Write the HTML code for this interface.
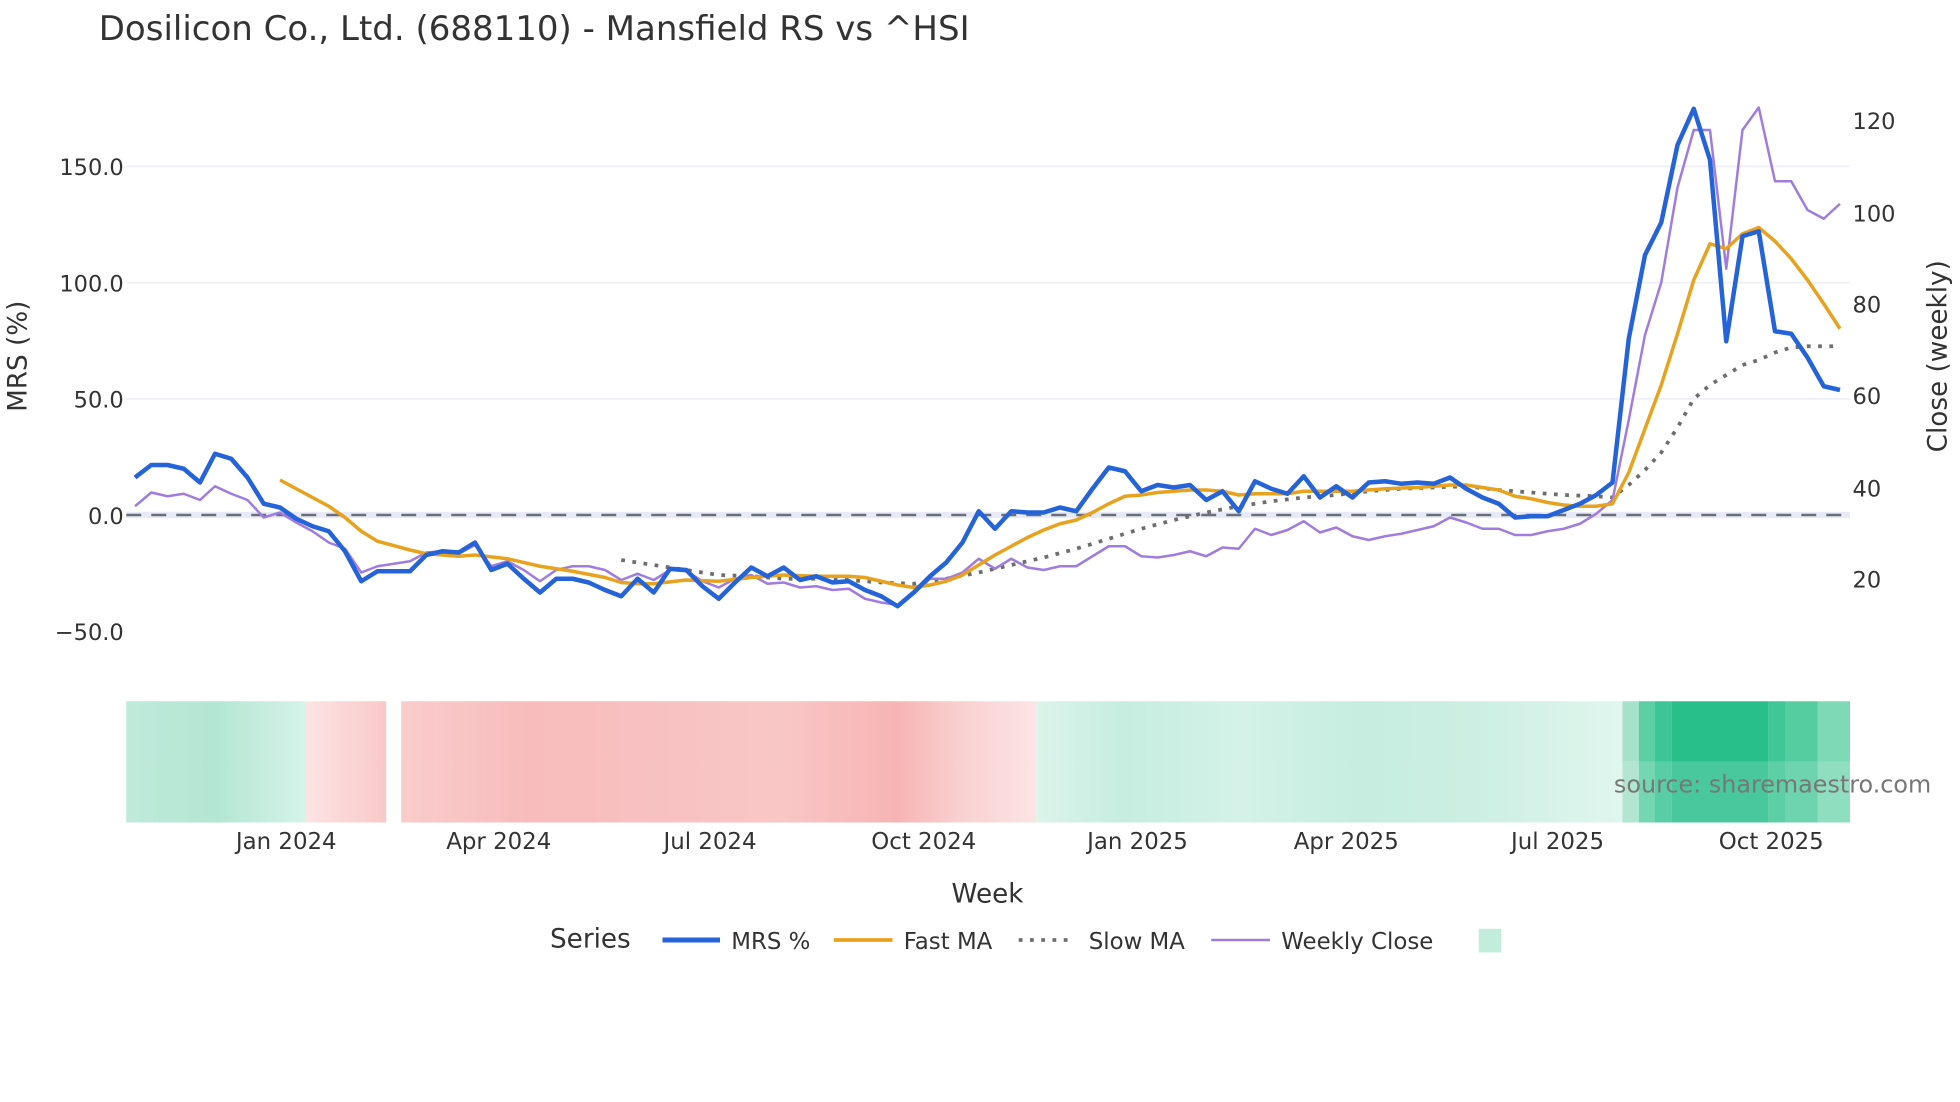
<!DOCTYPE html>
<html><head><meta charset="utf-8"><style>
html,body{margin:0;padding:0;background:#fff;}
svg{display:block;font-family:"DejaVu Sans","Liberation Sans",sans-serif;}
</style></head><body>
<svg width="1960" height="1102" viewBox="0 0 1568 881.6" xmlns="http://www.w3.org/2000/svg">
<rect width="1568" height="882" fill="#fff"/>
<text x="79" y="32" font-size="27.2" style="fill:#333">Dosilicon Co., Ltd. (688110) - Mansfield RS vs ^HSI</text>
<g stroke="#eef0f4" stroke-width="1.5">
<line x1="101" x2="1480" y1="133" y2="133"/><line x1="101" x2="1480" y1="226" y2="226"/><line x1="101" x2="1480" y1="319" y2="319"/>
</g>
<line x1="101" x2="1480" y1="412" y2="412" stroke="#e8eaf8" stroke-width="5"/>
<line x1="101" x2="1480" y1="412" y2="412" stroke="#6b6f78" stroke-width="2" stroke-dasharray="12,8"/>
<g font-size="18" fill="#333" text-anchor="end">
<text x="99" y="140">150.0</text><text x="99" y="233">100.0</text><text x="99" y="326">50.0</text><text x="99" y="419">0.0</text><text x="99" y="512">−50.0</text>
</g>
<g font-size="18" fill="#333">
<text x="1482" y="103">120</text><text x="1482" y="177">100</text><text x="1482" y="250">80</text><text x="1482" y="323">60</text><text x="1482" y="397">40</text><text x="1482" y="470">20</text>
</g>
<text transform="translate(21,285) rotate(-90)" font-size="21" fill="#333" text-anchor="middle">MRS (%)</text>
<text transform="translate(1557,285) rotate(-90)" font-size="21" fill="#333" text-anchor="middle">Close (weekly)</text>
<polyline fill="none" stroke="#6e6e6e" stroke-width="3" stroke-dasharray="3,6" points="497,448 523,452 549,456 575,460 601,461 627,463 653,463 679,464 705,466 731,467 757,463 783,458 809,452 835,446 861,439 887,431 913,423 939,416 965,410 991,405 1017,401 1043,398 1069,396 1095,393 1121,391 1147,390 1173,389 1199,392 1225,394 1251,396 1277,397 1290,398 1303,388 1316,376 1329,362 1342,342 1355,319 1368,308 1381,300 1394,292 1407,288 1420,282 1433,278 1446,277 1459,277 1472,277"/>
<polyline fill="none" stroke="#a07ce0" stroke-width="2" stroke-linejoin="round" points="108,405 121,394 134,397 147,395 160,400 172,389 185,395 198,400 211,414 224,410 237,418 250,425 263,434 276,439 289,458 302,453 315,451 328,449 341,442 354,441 367,443 380,436 393,453 406,449 419,456 432,465 445,456 458,453 471,453 484,456 497,464 510,459 523,464 536,456 549,457 562,465 575,470 588,463 601,460 614,467 627,466 640,470 653,469 666,472 679,471 692,479 705,482 718,484 731,475 744,463 757,463 770,458 783,447 796,455 809,447 822,454 835,456 848,453 861,453 874,445 887,437 900,437 913,445 926,446 939,444 952,441 965,445 978,438 991,439 1004,423 1017,428 1030,424 1043,417 1056,426 1069,422 1082,429 1095,432 1108,429 1121,427 1134,424 1147,421 1160,414 1173,418 1186,423 1199,423 1212,428 1225,428 1238,425 1251,423 1264,419 1277,411 1290,400 1303,336 1316,268 1329,226 1342,150 1355,104 1368,104 1381,215 1394,104 1407,86 1420,145 1433,145 1446,168 1459,175 1472,163"/>
<polyline fill="none" stroke="#e8a21d" stroke-width="2.8" stroke-linejoin="round" points="224,384 250,398 263,405 276,414 289,425 302,433 328,440 341,443 367,445 380,444 406,447 432,453 458,457 484,462 497,466 510,467 523,467 549,464 575,465 601,462 627,460 653,461 679,461 692,462 705,465 718,468 731,470 744,468 757,465 770,460 783,452 796,444 809,437 822,430 835,424 848,419 861,416 874,410 887,403 900,397 913,396 926,394 939,393 952,392 965,392 978,393 991,396 1004,395 1030,395 1043,393 1069,393 1082,393 1108,391 1134,390 1160,388 1173,388 1186,390 1199,392 1212,397 1225,399 1238,402 1251,404 1264,405 1277,405 1290,403 1303,378 1316,343 1329,308 1342,267 1355,224 1368,195 1381,199 1394,187 1407,182 1420,193 1433,207 1446,224 1459,243 1472,263"/>
<polyline fill="none" stroke="#2563d9" stroke-width="3.6" stroke-linejoin="round" points="108,382 121,372 134,372 147,375 160,386 172,363 185,367 198,382 211,403 224,406 237,415 250,421 263,425 276,441 289,465 302,457 315,457 328,457 341,444 354,441 367,442 380,434 393,456 406,451 419,463 432,474 445,463 458,463 471,466 484,472 497,477 510,463 523,474 536,455 549,456 562,469 575,479 588,466 601,454 614,461 627,454 640,464 653,461 666,466 679,465 692,472 705,477 718,485 731,474 744,461 757,450 770,434 783,409 796,423 809,409 822,410 835,410 848,406 861,409 874,391 887,374 900,377 913,393 926,388 939,390 952,388 965,400 978,393 991,409 1004,385 1017,391 1030,395 1043,381 1056,398 1069,389 1082,398 1095,386 1108,385 1121,387 1134,386 1147,387 1160,382 1173,391 1186,398 1199,403 1212,414 1225,413 1238,413 1251,408 1264,403 1277,396 1290,386 1303,271 1316,204 1329,178 1342,116 1355,87 1368,128 1381,273 1394,189 1407,185 1420,265 1433,267 1446,286 1459,309 1472,312"/>
<defs>
<linearGradient id="g1" x1="0" x2="1"><stop offset="0" stop-color="#bfeadb"/><stop offset="0.5" stop-color="#b3e6d3"/><stop offset="1" stop-color="#d6f3e9"/></linearGradient>
<linearGradient id="g2" x1="0" x2="1"><stop offset="0" stop-color="#fde4e4"/><stop offset="1" stop-color="#f9c8c8"/></linearGradient>
<linearGradient id="g3" x1="0" x2="1"><stop offset="0" stop-color="#f9cccc"/><stop offset="0.2" stop-color="#f8bcbc"/><stop offset="0.45" stop-color="#f8c2c2"/><stop offset="0.6" stop-color="#f9c6c6"/><stop offset="0.78" stop-color="#f7b4b4"/><stop offset="0.88" stop-color="#f9d0d0"/><stop offset="1" stop-color="#fce4e4"/></linearGradient>
<linearGradient id="g4" x1="0" x2="1"><stop offset="0" stop-color="#dcf4eb"/><stop offset="0.15" stop-color="#c6ede0"/><stop offset="0.35" stop-color="#d4f2e8"/><stop offset="0.55" stop-color="#c6ede0"/><stop offset="0.75" stop-color="#cdefe3"/><stop offset="1" stop-color="#e0f6ee"/></linearGradient>
</defs>
<rect x="101" y="561" width="143" height="97" fill="url(#g1)"/>
<rect x="244" y="561" width="65" height="97" fill="url(#g2)"/>
<rect x="321" y="561" width="508" height="97" fill="url(#g3)"/>
<rect x="829" y="561" width="469" height="97" fill="url(#g4)"/>
<rect x="1298" y="561" width="13" height="97" fill="#a6e2cb"/>
<rect x="1311" y="561" width="13" height="97" fill="#5ccfa5"/>
<rect x="1324" y="561" width="13" height="97" fill="#3cc596"/>
<rect x="1337" y="561" width="78" height="97" fill="#28bf8b"/>
<rect x="1415" y="561" width="13" height="97" fill="#40c797"/>
<rect x="1428" y="561" width="26" height="97" fill="#55cda1"/>
<rect x="1454" y="561" width="26" height="97" fill="#7dd9b6"/>
<rect x="1298" y="609" width="182" height="49" fill="#fff" opacity="0.15"/>
<text x="1545" y="634" font-size="19.1" fill="#777" text-anchor="end">source: sharemaestro.com</text>
<g font-size="18.3" fill="#333" text-anchor="middle">
<text x="229" y="679">Jan 2024</text><text x="399" y="679">Apr 2024</text><text x="568" y="679">Jul 2024</text><text x="739" y="679">Oct 2024</text><text x="910" y="679">Jan 2025</text><text x="1077" y="679">Apr 2025</text><text x="1246" y="679">Jul 2025</text><text x="1417" y="679">Oct 2025</text>
</g>
<text x="790" y="722" font-size="21" fill="#333" text-anchor="middle">Week</text>
<text x="440" y="758" font-size="21" fill="#333">Series</text>
<line x1="530" x2="576" y1="752" y2="752" stroke="#2563d9" stroke-width="4"/>
<text x="585" y="759" font-size="18.3" fill="#333">MRS %</text>
<line x1="667" x2="714" y1="752" y2="752" stroke="#e8a21d" stroke-width="3"/>
<text x="723" y="759" font-size="18.3" fill="#333">Fast MA</text>
<line x1="815" x2="860" y1="752" y2="752" stroke="#6e6e6e" stroke-width="3" stroke-dasharray="3,6"/>
<text x="871" y="759" font-size="18.3" fill="#333">Slow MA</text>
<line x1="969" x2="1016" y1="752" y2="752" stroke="#a07ce0" stroke-width="2"/>
<text x="1025" y="759" font-size="18.3" fill="#333">Weekly Close</text>
<rect x="1183" y="743" width="18" height="19" fill="#c2ecdc"/>
</svg>
</body></html>
